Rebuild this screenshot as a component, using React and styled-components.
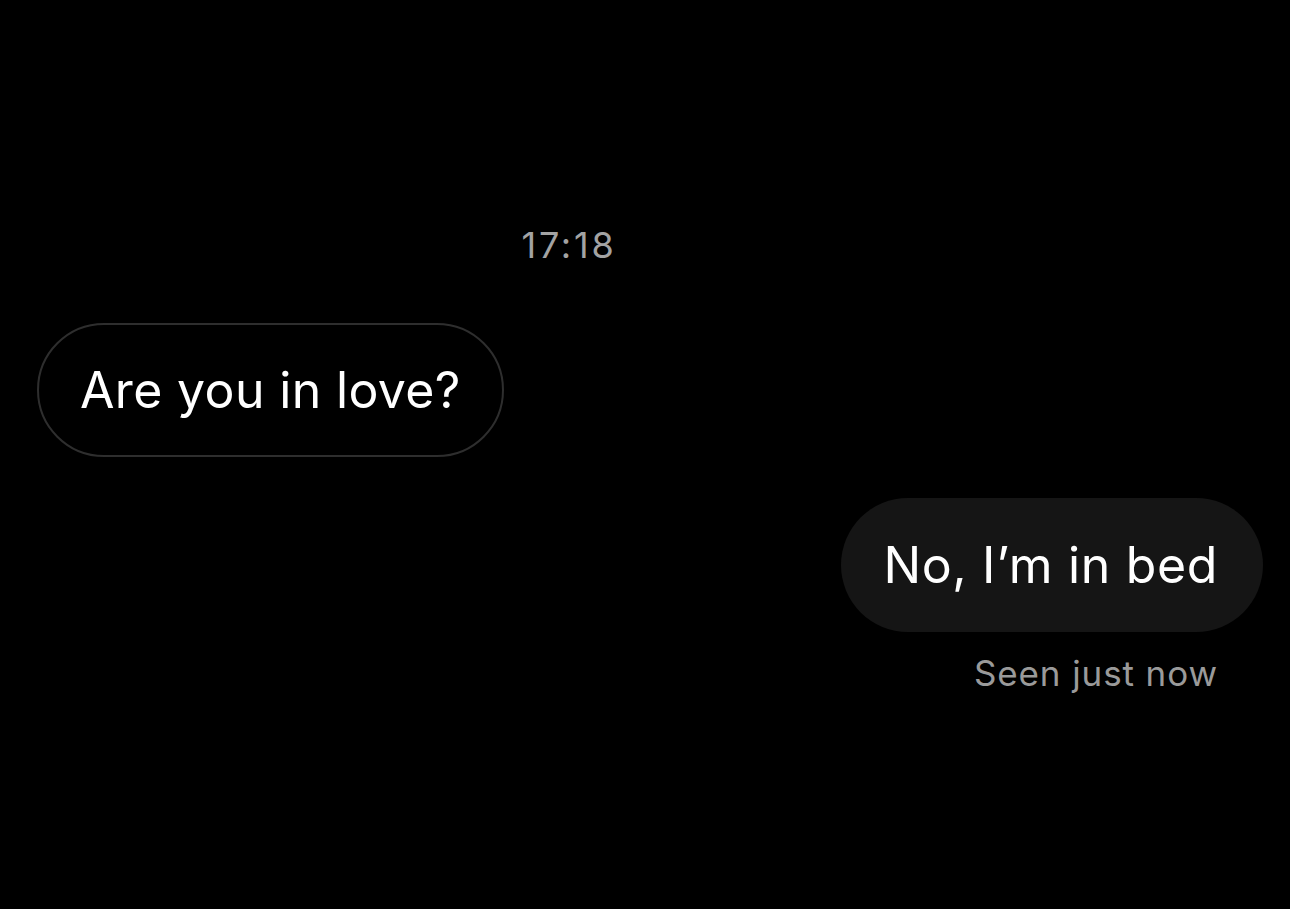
import React from "react";
import styled, { createGlobalStyle } from "styled-components";

const Global = createGlobalStyle`
  html, body { margin: 0; padding: 0; background: #000; }
  body { font-family: Inter, "Noto Sans", "Liberation Sans", sans-serif; }
  #root { min-height: 909px; }
`;

const Page = styled.div`
  width: 1290px;
  height: 909px;
  background: #000;
  display: flex;
  flex-direction: column;
  box-sizing: border-box;
  padding: 222px 27px 0 37px;
  overflow: hidden;
`;

const TimeRow = styled.div`
  display: flex;
  justify-content: center;
  padding-right: 162px;
  color: #a3a3a3;
  font-size: 36px;
  line-height: 46px;
  letter-spacing: 2.8px;
`;

const Row = styled.div`
  display: flex;
  flex-direction: column;
  align-items: ${(p) => (p.$mine ? "flex-end" : "flex-start")};
  margin-top: ${(p) => p.$top}px;
`;

const Bubble = styled.div`
  box-sizing: border-box;
  height: 134px;
  border-radius: 67px;
  display: flex;
  align-items: center;
  padding: ${(p) => (p.$mine ? "0 45px 0 42px" : "0 41px 0 41px")};
  background: ${(p) => (p.$mine ? "#151515" : "#000")};
  border: ${(p) => (p.$mine ? "none" : "2px solid #2e2e2e")};
  color: #fff;
  font-size: 50px;
  line-height: 60px;
  letter-spacing: ${(p) => (p.$mine ? "0.65px" : "0.35px")};
  white-space: nowrap;
`;

const Status = styled.div`
  margin-top: 19px;
  margin-right: 45px;
  color: #9a9a9a;
  font-size: 35px;
  line-height: 44px;
  letter-spacing: 0.9px;
`;

export default function App() {
  return (
    <>
      <Global />
      <Page>
        <TimeRow>17:18</TimeRow>
        <Row $top={55}>
          <Bubble>Are you in love?</Bubble>
        </Row>
        <Row $mine $top={41}>
          <Bubble $mine>No, I’m in bed</Bubble>
          <Status>Seen just now</Status>
        </Row>
      </Page>
    </>
  );
}
